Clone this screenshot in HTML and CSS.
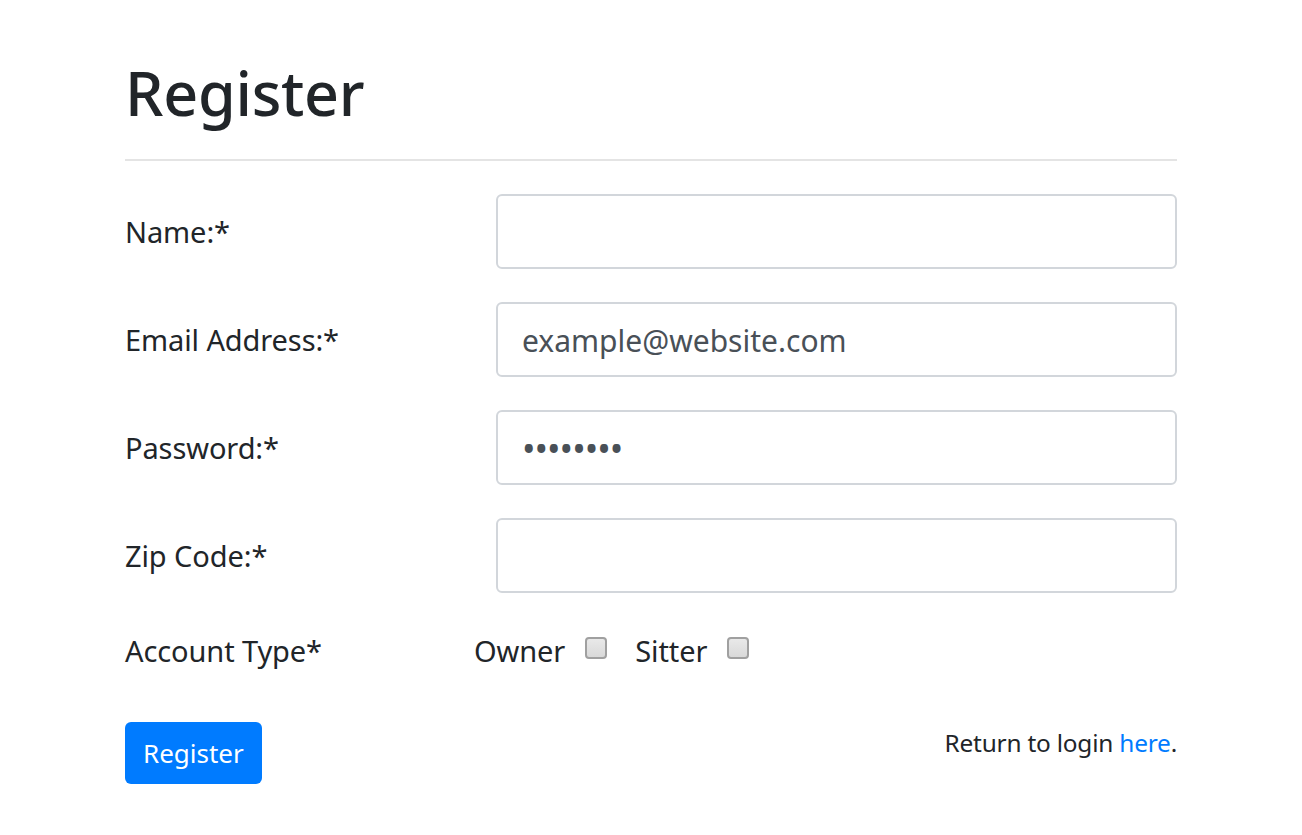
FILE: index.html
```html
<!DOCTYPE html>
<html lang="en">
<head>
<meta charset="utf-8">
<title>Register</title>
<link rel="stylesheet" href="styles.css">
</head>
<body>
<main class="container">
  <h1 class="title">Register</h1>
  <hr class="divider">
  <form class="form">
    <div class="row">
      <label class="label" for="name">Name:*</label>
      <input class="input" id="name" type="text">
    </div>
    <div class="row">
      <label class="label" for="email">Email Address:*</label>
      <input class="input" id="email" type="email" placeholder="example@website.com">
    </div>
    <div class="row">
      <label class="label" for="pw">Password:*</label>
      <input class="input pw" id="pw" type="password" value="password">
    </div>
    <div class="row">
      <label class="label" for="zip">Zip Code:*</label>
      <input class="input" id="zip" type="text">
    </div>
    <div class="row-type">
      <span class="label">Account Type*</span>
      <div class="checks">
        <label class="check">Owner <input type="checkbox" class="box"></label>
        <label class="check">Sitter <input type="checkbox" class="box"></label>
      </div>
    </div>
    <div class="actions">
      <button type="button" class="btn">Register</button>
      <p class="return">Return to login <a href="#" class="link">here</a>.</p>
    </div>
  </form>
</main>
</body>
</html>
```

FILE: styles.css
```css
* { box-sizing: border-box; }
body {
  margin: 0;
  background: #fff;
  color: #212529;
  font-family: "Noto Sans", "Open Sans", sans-serif;
}
.container {
  width: 1052px;
  margin: 0 auto;
  padding-top: 57px;
}
.title {
  margin: 0;
  font-size: 61px;
  line-height: 72px;
  font-weight: 500;
  letter-spacing: -0.3px;
}
.divider {
  margin: 30px 0 0;
  border: 0;
  border-top: 2px solid #e4e4e4;
}
.form {
  display: flex;
  flex-direction: column;
  padding-top: 33px;
}
.row {
  display: grid;
  grid-template-columns: 371px 1fr;
  align-items: center;
  margin-bottom: 33px;
}
.label {
  font-size: 29px;
  line-height: 36px;
  letter-spacing: -0.1px;
}
.input {
  height: 75px;
  width: 100%;
  border: 2px solid #d2d6db;
  border-radius: 6px;
  padding: 2px 24px 0;
  font-family: inherit;
  font-size: 30px;
  color: #495057;
  background: #fff;
  outline: none;
}
.input.pw { font-size: 36px; letter-spacing: -1px; }
.input::placeholder { color: #495057; opacity: 1; }
.row-type {
  display: grid;
  grid-template-columns: 349px 1fr;
  align-items: center;
  height: 50px;
}
.checks {
  display: flex;
  gap: 28px;
  align-items: center;
}
.check {
  display: flex;
  align-items: center;
  gap: 20px;
  font-size: 29px;
  line-height: 36px;
  letter-spacing: -0.1px;
}
.box {
  appearance: none;
  -webkit-appearance: none;
  margin: -6px 0 0;
  width: 22px;
  height: 22px;
  border: 2px solid #a0a0a0;
  border-radius: 4px;
  background: linear-gradient(#e9e9e9, #d9d9d9);
}
.actions {
  display: flex;
  justify-content: space-between;
  align-items: flex-start;
  margin-top: 46px;
}
.btn {
  height: 62px;
  padding: 0 18px;
  border: 0;
  border-radius: 6px;
  background: #007bff;
  color: #fff;
  font-family: inherit;
  font-size: 26px;
  letter-spacing: 0;
}
.return {
  margin: 3px 0 0;
  font-size: 24.4px;
  line-height: 36px;
  letter-spacing: -0.2px;
}
.link { color: #007bff; text-decoration: none; }
```
